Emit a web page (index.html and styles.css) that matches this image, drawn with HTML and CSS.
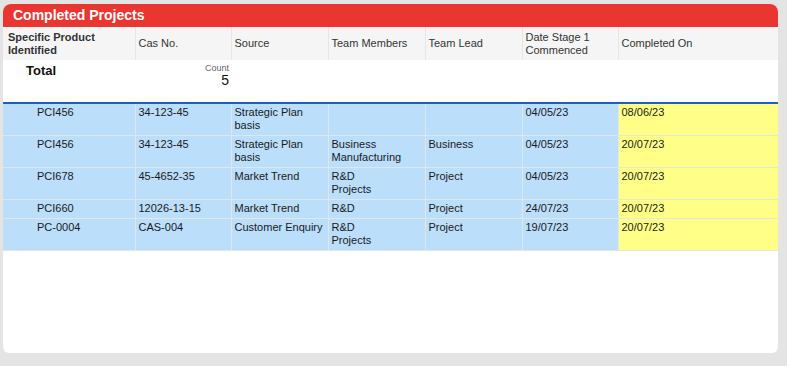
FILE: index.html
```html
<!DOCTYPE html>
<html lang="en">
<head>
  <meta charset="UTF-8" />
  <title>Completed Projects</title>
  <link rel="stylesheet" href="styles.css">
</head>
<body>
  <div class="card">
    <div class="card-title">Completed Projects</div>
    <table class="grid">
      <colgroup>
        <col class="c-product">
        <col class="c-cas">
        <col class="c-source">
        <col class="c-members">
        <col class="c-lead">
        <col class="c-date">
        <col class="c-done">
      </colgroup>
      <thead>
        <tr>
          <th class="first">Specific Product Identified</th>
          <th>Cas No.</th>
          <th>Source</th>
          <th>Team Members</th>
          <th>Team Lead</th>
          <th>Date Stage 1 Commenced</th>
          <th>Completed On</th>
        </tr>
        <tr class="total-row">
          <td class="total-label">Total</td>
          <td class="count">
            <div class="count-label">Count</div>
            <div class="count-value">5</div>
          </td>
          <td></td><td></td><td></td><td></td><td></td>
        </tr>
      </thead>
      <tbody>
        <tr>
          <td class="product">PCI456</td>
          <td>34-123-45</td>
          <td>Strategic Plan basis</td>
          <td></td>
          <td></td>
          <td>04/05/23</td>
          <td class="done">08/06/23</td>
        </tr>
        <tr>
          <td class="product">PCI456</td>
          <td>34-123-45</td>
          <td>Strategic Plan basis</td>
          <td>Business Manufacturing</td>
          <td>Business</td>
          <td>04/05/23</td>
          <td class="done">20/07/23</td>
        </tr>
        <tr>
          <td class="product">PCI678</td>
          <td>45-4652-35</td>
          <td>Market Trend</td>
          <td>R&amp;D<br>Projects</td>
          <td>Project</td>
          <td>04/05/23</td>
          <td class="done">20/07/23</td>
        </tr>
        <tr>
          <td class="product">PCI660</td>
          <td>12026-13-15</td>
          <td>Market Trend</td>
          <td>R&amp;D</td>
          <td>Project</td>
          <td>24/07/23</td>
          <td class="done">20/07/23</td>
        </tr>
        <tr>
          <td class="product">PC-0004</td>
          <td>CAS-004</td>
          <td>Customer Enquiry</td>
          <td>R&amp;D<br>Projects</td>
          <td>Project</td>
          <td>19/07/23</td>
          <td class="done">20/07/23</td>
        </tr>
      </tbody>
    </table>
  </div>
</body>
</html>
```

FILE: styles.css
```css
body {
  margin: 0;
  padding: 4px 9px 0 3px;
  background: #e4e4e4;
  font-family: 'Liberation Sans', Arial, sans-serif;
  height: 366px;
  box-sizing: border-box;
}

.card {
  background: #fff;
  width: 775px;
  height: 349px;
  border-radius: 8px 8px 6px 6px;
  overflow: hidden;
}

.card-title {
  background: #ea3530;
  color: #fff;
  font-weight: bold;
  font-size: 14px;
  height: 23px;
  line-height: 23px;
  padding-left: 10px;
}

.grid {
  width: 775px;
  table-layout: fixed;
  border-collapse: collapse;
  font-size: 11px;
}

.c-product { width: 132px; }
.c-cas { width: 96px; }
.c-source { width: 97px; }
.c-members { width: 97px; }
.c-lead { width: 97px; }
.c-date { width: 96px; }
.c-done { width: 160px; }

th {
  background: #f5f5f5;
  color: #333;
  font-weight: normal;
  text-align: left;
  height: 33px;
  padding: 0 3px;
  line-height: 13px;
  border-left: 1px solid #e6e6e6;
}

th.first {
  border-left: none;
  padding-left: 5px;
  font-weight: bold;
}

.total-row td {
  height: 39px;
  vertical-align: top;
  border-bottom: 2px solid #1565c0;
  padding: 0;
}

.total-label {
  font-weight: bold;
  font-size: 13px;
  padding: 3px 0 0 23px !important;
  color: #111;
}

.count {
  text-align: right;
  padding: 0 2px 0 0 !important;
}

.count-label {
  font-size: 9px;
  color: #666;
  line-height: 10px;
  margin-top: 3px;
}

.count-value {
  font-size: 14px;
  line-height: 15px;
  color: #111;
}

tbody td {
  background: #bbdefb;
  color: #1a1a1a;
  vertical-align: top;
  line-height: 13px;
  padding: 2px 3px 3px 3px;
  border: 1px solid #dfe6ec;
}

tbody tr:first-child td {
  border-top: none;
}

tbody td:first-child {
  border-left: none;
}

tbody td:last-child {
  border-right: none;
}

td.product {
  padding-left: 34px;
}

td.done {
  background: #ffff88;
}
```
